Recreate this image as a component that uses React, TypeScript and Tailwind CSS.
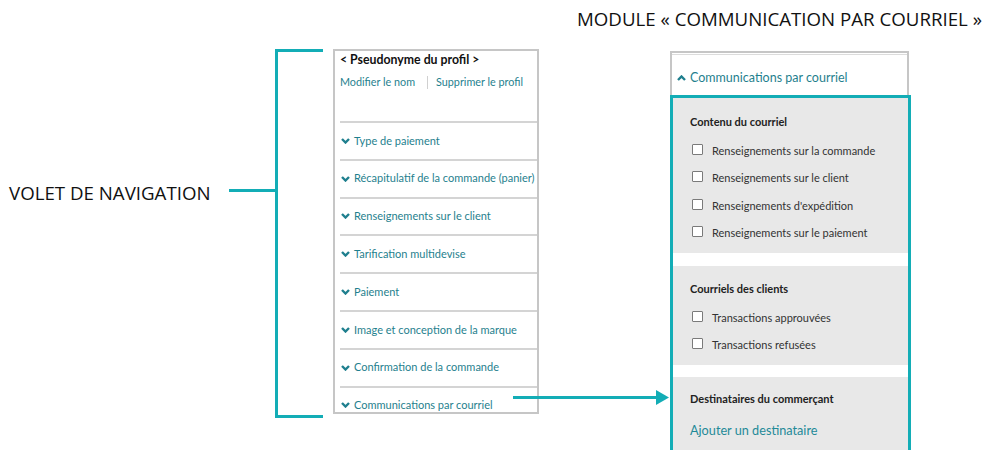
import React from "react";

const Down = () => (
  <svg width="9" height="6" viewBox="0 0 9 6" className="shrink-0">
    <polyline points="1,1 4.5,4.5 8,1" fill="none" stroke="#1f7f8e" strokeWidth="2.4" />
  </svg>
);
const Up = () => (
  <svg width="9" height="6" viewBox="0 0 9 6" className="shrink-0">
    <polyline points="1,5 4.5,1.5 8,5" fill="none" stroke="#1f7f8e" strokeWidth="2.4" />
  </svg>
);

const navItems = [
  "Type de paiement",
  "Récapitulatif de la commande (panier)",
  "Renseignements sur le client",
  "Tarification multidevise",
  "Paiement",
  "Image et conception de la marque",
  "Confirmation de la commande",
  "Communications par courriel",
];

const Check = ({ label }: { label: string }) => (
  <div className="h-[27.5px] flex items-center pl-[2px]">
    <span className="w-[11px] h-[11px] border border-[#7a7a7a] bg-white rounded-[1px] mb-[3px] shrink-0" />
    <span className="ml-[9px] text-[11px] text-[#333]">{label}</span>
  </div>
);

export default function App() {
  return (
    <div
      className="relative w-[984px] h-[450px] bg-white overflow-hidden"
      style={{ fontFamily: "Lato, 'Noto Sans', sans-serif" }}
    >
      {/* Labels */}
      <div
        className="absolute left-[577px] top-[6px] text-[18.7px] leading-[26px] text-[#111] whitespace-nowrap"
        style={{ fontFamily: "'Open Sans', sans-serif" }}
      >
        MODULE « COMMUNICATION PAR COURRIEL »
      </div>
      <div
        className="absolute left-[9px] top-[180px] text-[18.7px] leading-[26px] text-[#111] whitespace-nowrap"
        style={{ fontFamily: "'Open Sans', sans-serif" }}
      >
        VOLET DE NAVIGATION
      </div>

      {/* bracket */}
      <div className="absolute left-[229px] top-[189px] w-[48px] h-[3px] bg-[#13adb6]" />
      <div className="absolute left-[275px] top-[49px] w-[3px] h-[369px] bg-[#13adb6]" />
      <div className="absolute left-[275px] top-[49px] w-[48px] h-[3px] bg-[#13adb6]" />
      <div className="absolute left-[275px] top-[415px] w-[48px] h-[3px] bg-[#13adb6]" />

      {/* Left panel */}
      <div className="absolute left-[333px] top-[49px] w-[206px] h-[365px] border-2 border-[#c6c6c6] overflow-hidden bg-white">
        <div className="h-[70px] pl-[5px] pt-[1px]">
          <div className="text-[12.3px] font-bold text-[#111] leading-[15px]">&lt; Pseudonyme du profil &gt;</div>
          <div className="flex items-center mt-[8px] text-[10.8px] text-[#1f7f8e] leading-[14px]">
            <span>Modifier le nom</span>
            <span className="ml-[12px] mr-[8px] w-px h-[13px] bg-[#d0d0d0]" />
            <span>Supprimer le profil</span>
          </div>
        </div>
        <div className="ml-[5px]">
          {navItems.map((t) => (
            <div key={t} className="h-[37.8px] border-t-2 border-[#d4d4d4] flex items-center gap-[4px] pl-[1px]">
              <Down />
              <span className="text-[11px] text-[#1f7f8e] whitespace-nowrap">{t}</span>
            </div>
          ))}
        </div>
      </div>

      {/* arrow */}
      <svg className="absolute left-[510px] top-[388px]" width="162" height="20" viewBox="0 0 162 20">
        <line x1="3" y1="9.5" x2="148" y2="9.5" stroke="#13adb6" strokeWidth="3" />
        <polygon points="146,2 159,9.5 146,17" fill="#13adb6" />
      </svg>

      {/* Right panel */}
      <div className="absolute left-[670px] top-[51px] w-[241px] h-[420px]">
        <div className="h-[44px] mr-[2px] border-x-2 border-t-2 border-[#c6c6c6] bg-white">
          <div className="h-px bg-[#dcdcdc] mt-[1px]" />
          <div className="flex items-center gap-[4px] pl-[5px] pt-[14px]">
            <Up />
            <span className="text-[12.5px] text-[#1f7f8e]">Communications par courriel</span>
          </div>
        </div>
        <div className="border-[3px] border-[#13adb6] bg-white h-[380px]">
          <div className="bg-[#e8e8e8] pl-[17px] pt-[14px] pb-[6px]">
            <div className="h-[20px] flex items-center text-[11px] font-bold text-[#222]">Contenu du courriel</div>
            <div className="mt-[5px]">
              <Check label="Renseignements sur la commande" />
              <Check label="Renseignements sur le client" />
              <Check label="Renseignements d'expédition" />
              <Check label="Renseignements sur le paiement" />
            </div>
          </div>
          <div className="h-[13px]" />
          <div className="bg-[#e8e8e8] pl-[17px] pt-[13px] pb-[6px]">
            <div className="h-[20px] flex items-center text-[11px] font-bold text-[#222]">Courriels des clients</div>
            <div className="mt-[5px]">
              <Check label="Transactions approuvées" />
              <Check label="Transactions refusées" />
            </div>
          </div>
          <div className="h-[12px]" />
          <div className="bg-[#e8e8e8] pl-[17px] pt-[12px] h-[100px]">
            <div className="h-[20px] flex items-center text-[11px] font-bold text-[#222]">Destinataires du commerçant</div>
            <div className="mt-[13px] text-[12.7px] text-[#1f8a98] leading-[16px]">Ajouter un destinataire</div>
          </div>
        </div>
      </div>
    </div>
  );
}
